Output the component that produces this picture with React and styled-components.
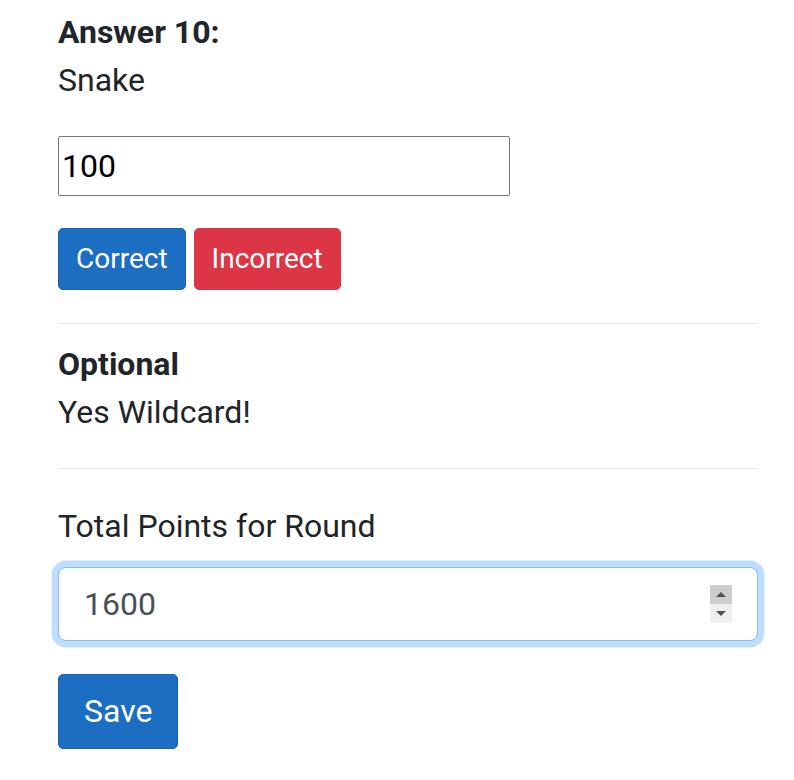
import React from 'react'
import styled, { createGlobalStyle } from 'styled-components'

const GlobalStyle = createGlobalStyle`
  body {
    margin: 0;
    background: #fff;
    font-family: Roboto, "Liberation Sans", sans-serif;
    font-size: 32px;
    line-height: 1.5;
    color: #212529;
  }
`

const Page = styled.div`
  width: 700px;
  padding: 8px 36px 0 58px;
`

const Title = styled.div`
  font-weight: 700;
`

const Text = styled.div`
  font-weight: 400;
`

const AnswerInput = styled.input`
  display: block;
  box-sizing: border-box;
  width: 452px;
  height: 60px;
  margin-top: 32px;
  padding: 1px 3px;
  border: 1px solid #767676;
  border-radius: 2px;
  font-family: Roboto, "Liberation Sans", sans-serif;
  font-size: 32px;
  color: #000;
  outline: none;
`

const ButtonRow = styled.div`
  display: flex;
  gap: 8px;
  margin-top: 32px;
`

const Button = styled.button`
  font-family: Roboto, "Liberation Sans", sans-serif;
  font-size: ${(p) => (p.$small ? '28px' : '32px')};
  line-height: ${(p) => (p.$small ? '42px' : '48px')};
  padding: ${(p) => (p.$small ? '9px 17px' : '12px 25px 13px')};
  margin-top: ${(p) => p.$mt || 0}px;
  border: 1px solid ${(p) => (p.$danger ? '#dc3545' : '#1861ac')};
  background: ${(p) => (p.$danger ? '#dc3545' : '#1b6ec2')};
  color: #fff;
  border-radius: 5px;
  cursor: pointer;
`

const Divider = styled.hr`
  border: 0;
  border-top: 1px solid rgba(0, 0, 0, 0.1);
  margin: ${(p) => p.$top}px 0 ${(p) => p.$bottom}px;
`

const Label = styled.label`
  display: block;
  margin-bottom: 17px;
`

const FocusField = styled.div`
  box-sizing: border-box;
  display: flex;
  align-items: center;
  height: 74px;
  padding: 0 24px 0 25px;
  border: 1px solid #80bdff;
  border-radius: 8px;
  box-shadow: 0 0 0 6.4px rgba(0, 123, 255, 0.25);
  background: #fff;
`

const NumberInput = styled.input`
  flex: 1;
  min-width: 0;
  border: 0;
  padding: 0;
  outline: none;
  font-family: Roboto, "Liberation Sans", sans-serif;
  font-size: 32px;
  color: #495057;
  background: transparent;
`

const Spinner = styled.div`
  display: flex;
  flex-direction: column;
  width: 22px;
  margin-right: 1px;
`

const SpinHalf = styled.div`
  height: 19px;
  display: flex;
  align-items: center;
  justify-content: center;
  background: ${(p) => (p.$active ? '#cdcdcd' : '#efefef')};
`

function Arrow({ up }) {
  return (
    <svg width="10" height="5" viewBox="0 0 10 5">
      <path d={up ? 'M0 5 L5 0 L10 5 Z' : 'M0 0 L10 0 L5 5 Z'} fill="#505050" />
    </svg>
  )
}

function App() {
  return (
    <Page>
      <GlobalStyle />
      <Title>Answer 10:</Title>
      <Text>Snake</Text>
      <AnswerInput type="text" defaultValue="100" />
      <ButtonRow>
        <Button $small>Correct</Button>
        <Button $small $danger>
          Incorrect
        </Button>
      </ButtonRow>
      <Divider $top={33} $bottom={16} />
      <Title>Optional</Title>
      <Text>Yes Wildcard!</Text>
      <Divider $top={32} $bottom={33} />
      <Label htmlFor="points">Total Points for Round</Label>
      <FocusField>
        <NumberInput id="points" type="text" defaultValue="1600" />
        <Spinner>
          <SpinHalf $active>
            <Arrow up />
          </SpinHalf>
          <SpinHalf>
            <Arrow />
          </SpinHalf>
        </Spinner>
      </FocusField>
      <Button $mt={33}>Save</Button>
    </Page>
  )
}

export default App
